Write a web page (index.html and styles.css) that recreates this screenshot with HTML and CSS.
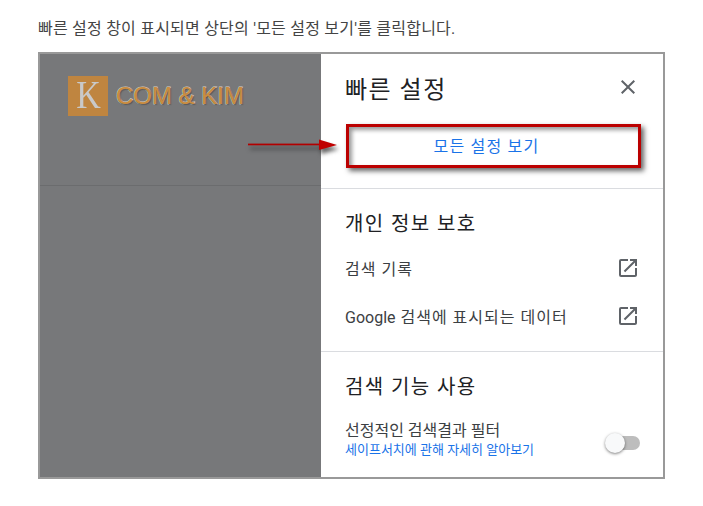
FILE: index.html
```html
<!DOCTYPE html>
<html lang="ko">
<head>
  <meta charset="UTF-8">
  <title>빠른 설정</title>
  <link rel="stylesheet" href="styles.css">
</head>
<body>
  <p class="intro">빠른 설정 창이 표시되면 상단의 '모든 설정 보기'를 클릭합니다.</p>

  <div class="frame">
    <!-- dimmed page behind the panel -->
    <div class="scrim">
      <div class="scrim-top">
        <div class="logo">
          <span class="logo-mark"><span class="logo-k">K</span></span>
          <span class="logo-text">COM &amp; KIM</span>
        </div>
      </div>
    </div>

    <div class="panel">
      <div class="panel-head">
        <h2 class="panel-title">빠른 설정</h2>
        <svg class="close-icon" width="24" height="24" viewBox="0 0 24 24"><path d="M19 6.41 17.59 5 12 10.59 6.41 5 5 6.41 10.59 12 5 17.59 6.41 19 12 13.41 17.59 19 19 17.59 13.41 12z"/></svg>
      </div>
      <div class="all-settings">모든 설정 보기</div>

      <div class="section section-privacy">
        <h3 class="section-title">개인 정보 보호</h3>
        <div class="link-row">
          <span>검색 기록</span>
          <svg class="open-icon" width="24" height="24" viewBox="0 0 24 24"><path d="M19 19H5V5h7V3H5a2 2 0 0 0-2 2v14a2 2 0 0 0 2 2h14c1.1 0 2-.9 2-2v-7h-2v7zM14 3v2h3.59l-9.83 9.83 1.41 1.41L19 6.41V10h2V3h-7z"/></svg>
        </div>
        <div class="link-row">
          <span><span class="latin">Google</span> 검색에 표시되는 데이터</span>
          <svg class="open-icon" width="24" height="24" viewBox="0 0 24 24"><path d="M19 19H5V5h7V3H5a2 2 0 0 0-2 2v14a2 2 0 0 0 2 2h14c1.1 0 2-.9 2-2v-7h-2v7zM14 3v2h3.59l-9.83 9.83 1.41 1.41L19 6.41V10h2V3h-7z"/></svg>
        </div>
      </div>

      <div class="section section-search">
        <h3 class="section-title">검색 기능 사용</h3>
        <div class="filter-row">
          <div>
            <div class="filter-name">선정적인 검색결과 필터</div>
            <div class="filter-link">세이프서치에 관해 자세히 알아보기</div>
          </div>
          <div class="switch"><span class="switch-knob"></span></div>
        </div>
      </div>
    </div>

    <!-- red arrow drawn over the screenshot -->
    <svg class="arrow" width="100" height="20" viewBox="0 0 100 20"><path d="M0 9h72V9.900H0z" fill="#b30000" stroke="#b30000" stroke-width=".8"/><path d="M71 4.500 89 10 71 15z" fill="#c00000"/></svg>
  </div>
</body>
</html>
```

FILE: styles.css
```css
body {
  margin: 0;
  background-color: #fff;
  font-family: Roboto, "Noto Sans CJK KR", sans-serif;
}

.intro {
  margin: 0;
  padding: 18px 0 0 38px;
  height: 34px;
  font-size: 16px;
  line-height: 22px;
  letter-spacing: 0.220px;
  color: #444;
}

.frame {
  position: relative;
  display: flex;
  box-sizing: border-box;
  width: 627px;
  height: 427px;
  margin-left: 38px;
  border: 2px solid #999;
}

/* Left dimmed side */
.scrim {
  width: 281px;
  background-color: #77787a;
}
.scrim-top {
  height: 131px;
  border-bottom: 1px solid #6b6c6e;
}
.logo {
  display: flex;
  align-items: center;
  padding: 22px 0 0 28px;
}
.logo-mark {
  width: 40px;
  height: 40px;
  background-color: #bf8540;
  color: #c9c9c9;
  font-family: "Liberation Serif", serif;
  font-size: 40px;
  line-height: 38px;
  text-align: center;
}
.logo-k {
  display: inline-block;
  transform: scaleX(0.85);
}
.logo-text {
  margin-left: 8px;
  font-family: "Liberation Sans", sans-serif;
  font-size: 24px;
  color: #c98c40;
  -webkit-text-stroke: 1.200px #d2cdc4;
  paint-order: stroke fill;
  text-shadow: 1px 1px 1px #555;
}

/* Quick settings panel */
.panel {
  flex: 1;
  background-color: #fff;
}
.panel-head {
  display: flex;
  justify-content: space-between;
  align-items: center;
  padding: 14px 23px 0 24px;
  height: 38px;
}
.panel-title {
  margin: 0;
  font-size: 24px;
  font-weight: 400;
  letter-spacing: 1.500px;
  color: #202124;
}
.close-icon {
  fill: #5f6368;
}
.all-settings {
  box-sizing: border-box;
  width: 295px;
  height: 44px;
  margin: 18px 0 0 25px;
  padding-right: 14px;
  border: 3px solid #bb0000;
  box-shadow: 3px 3px 5px #666, inset 3px 3px 4px #999;
  font-size: 16px;
  line-height: 40px;
  letter-spacing: 1.200px;
  text-align: center;
  color: #1a73e8;
}

.section {
  border-top: 1px solid #dadce0;
  padding: 0 23px 0 24px;
}
.section-privacy {
  margin-top: 20px;
  height: 162px;
}
.section-title {
  margin: 0;
  padding-top: 21px;
  font-size: 20px;
  line-height: 28px;
  font-weight: 400;
  letter-spacing: 1.400px;
  color: #202124;
}
.link-row {
  display: flex;
  justify-content: space-between;
  align-items: center;
  height: 48px;
  font-size: 16px;
  letter-spacing: 1px;
  color: #3c4043;
}
.latin {
  letter-spacing: 0;
}
.section-privacy .section-title + .link-row {
  margin-top: 6px;
}
.open-icon {
  fill: #5f6368;
}

.filter-row {
  display: flex;
  justify-content: space-between;
  align-items: center;
  margin-top: 20px;
}
.filter-name {
  font-size: 16px;
  line-height: 20px;
  color: #3c4043;
}
.filter-link {
  font-size: 13px;
  line-height: 17px;
  color: #1a73e8;
}
.switch {
  position: relative;
  width: 34px;
  height: 14px;
  margin-top: 6px;
  border-radius: 7px;
  background-color: #bdbdbd;
}
.switch-knob {
  position: absolute;
  left: -1px;
  top: -3px;
  width: 20px;
  height: 20px;
  border-radius: 50%;
  background-color: #f8f9fa;
  box-shadow: 0 1px 3px rgba(0, 0, 0, 0.5);
}

.arrow {
  position: absolute;
  left: 208px;
  top: 81px;
  filter: drop-shadow(2px 4px 2px rgba(30, 30, 30, 0.7));
}
```
